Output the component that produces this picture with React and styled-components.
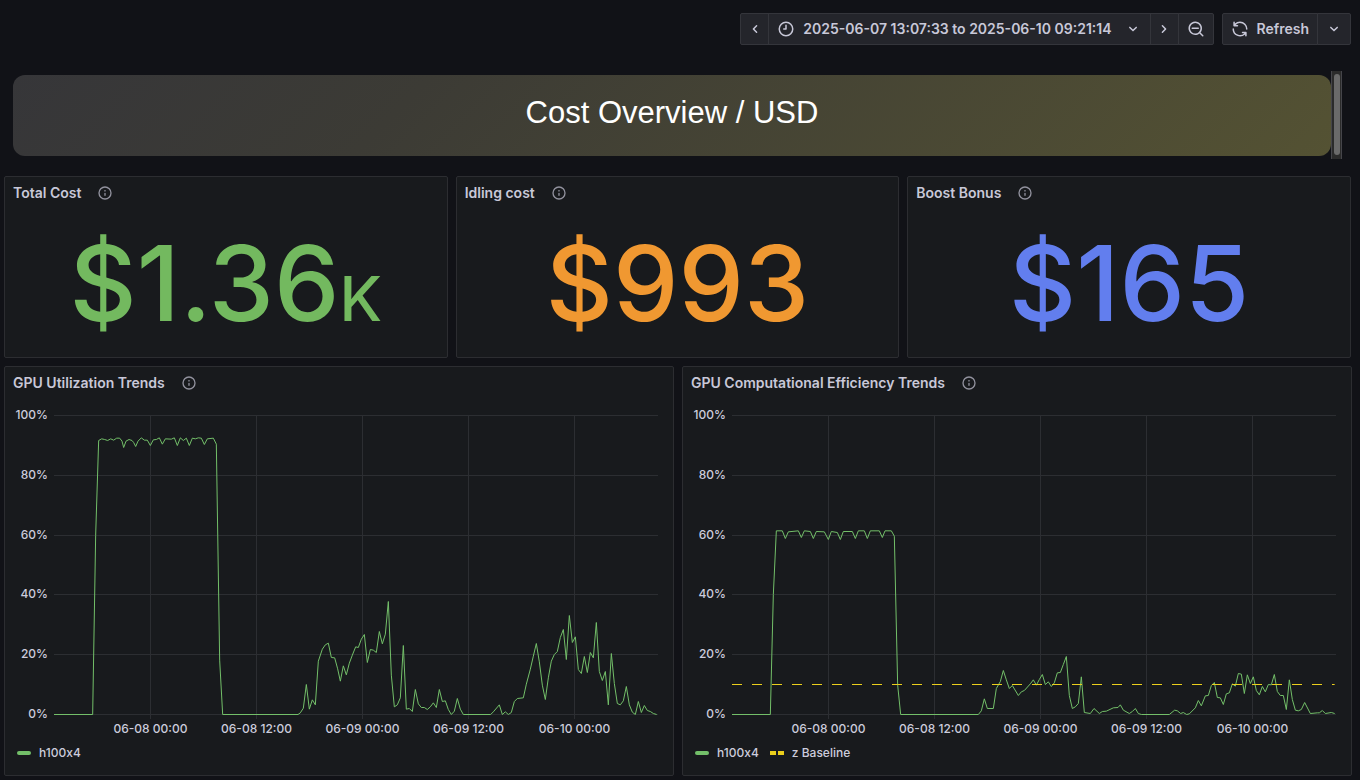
import React from "react";
import styled, { createGlobalStyle } from "styled-components";

const ICONS = {
  left: "M11.29,12l3.54-3.54a1,1,0,0,0,0-1.41,1,1,0,0,0-1.42,0L9.17,11.29a1,1,0,0,0,0,1.42L13.41,17a1,1,0,0,0,.71.29,1,1,0,0,0,.71-.29,1,1,0,0,0,0-1.41Z",
  right:
    "M14.83,11.29,10.59,7.05a1,1,0,0,0-1.42,0,1,1,0,0,0,0,1.41L12.71,12,9.17,15.54a1,1,0,0,0,0,1.41,1,1,0,0,0,.71.29,1,1,0,0,0,.71-.29l4.24-4.24A1,1,0,0,0,14.83,11.29Z",
  down: "M17,9.17a1,1,0,0,0-1.41,0L12,12.71,8.46,9.17a1,1,0,0,0-1.41,0,1,1,0,0,0,0,1.42l4.24,4.24a1,1,0,0,0,1.42,0L17,10.59A1,1,0,0,0,17,9.17Z",
  clock:
    "M12,2A10,10,0,1,0,22,12,10,10,0,0,0,12,2Zm0,18a8,8,0,1,1,8-8A8,8,0,0,1,12,20ZM12,6a1,1,0,0,0-1,1v4H9a1,1,0,0,0,0,2h3a1,1,0,0,0,1-1V7A1,1,0,0,0,12,6Z",
  zoomOut:
    "M21.71,20.29,18,16.61A9,9,0,1,0,16.61,18l3.68,3.68a1,1,0,0,0,1.42,0A1,1,0,0,0,21.71,20.29ZM11,18a7,7,0,1,1,7-7A7,7,0,0,1,11,18Zm4-8H7a1,1,0,0,0,0,2h8a1,1,0,0,0,0-2Z",
  sync: "M19.91,15.51H15.38a1,1,0,0,0,0,2h2.4A8,8,0,0,1,4,12a1,1,0,1,0-2,0,10,10,0,0,0,16.88,7.23V21a1,1,0,0,0,2,0V16.5A1,1,0,0,0,19.91,15.51ZM12,2A10,10,0,0,0,5.12,4.77V3a1,1,0,0,0-2,0V7.5a1,1,0,0,0,1,1h4.5a1,1,0,0,0,0-2H6.22A8,8,0,0,1,20,12a1,1,0,0,0,2,0A10,10,0,0,0,12,2Z",
  info: "M12,2A10,10,0,1,0,22,12,10.01114,10.01114,0,0,0,12,2Zm0,18a8,8,0,1,1,8-8A8.00917,8.00917,0,0,1,12,20Zm0-8.5a1,1,0,0,0-1,1v3a1,1,0,0,0,2,0v-3A1,1,0,0,0,12,11.5Zm0-4a1.25,1.25,0,1,0,1.25,1.25A1.25,1.25,0,0,0,12,7.5Z",
};

const STATS = [
  { title: "Total Cost", value: "$1.36", unit: "K", color: "#73b95f" },
  { title: "Idling cost", value: "$993", color: "#f09831" },
  { title: "Boost Bonus", value: "$165", color: "#627eee" },
];

const Y_TICKS = ["100%", "80%", "60%", "40%", "20%", "0%"];
const X_TICKS = [
  "06-08 00:00",
  "06-08 12:00",
  "06-09 00:00",
  "06-09 12:00",
  "06-10 00:00",
];

// series points: x 0-1812, y 0 (100%) to 897 (0%)
const UTILIZATION =
  "0,897 116,897 125,359 134,75 143,70 152,72 161,75 170,70 179,74 188,68 197,68 204,77 209,96 216,77 225,72 234,75 239,81 245,93 252,77 262,67 271,74 280,74 289,90 298,73 307,72 316,67 325,86 334,70 352,71 361,67 370,90 379,67 388,75 397,68 406,90 415,68 424,70 433,67 442,68 451,87 460,70 478,68 487,86 497,734 506,897 " +
  "732,897 739,892 748,878 757,807 766,881 775,853 784,868 793,737 805,701 814,688 823,683 832,726 842,727 851,760 859,797 868,751 877,778 886,743 895,719 905,694 913,696 922,671 931,657 940,741 949,702 958,704 967,711 976,648 985,685 994,656 1003,558 1012,779 1021,874 1030,868 1039,847 1048,690 1057,881 1066,879 1075,888 1084,822 1093,865 1102,876 1111,876 1120,882 1129,874 1138,862 1147,876 1156,822 1165,858 1174,856 1183,882 1192,897 1201,887 1210,849 " +
  "1219,881 1228,897 1310,897 1318,889 1336,868 1345,897 1354,889 1363,897 1372,891 1381,858 1390,849 1408,847 1417,806 1429,761 1438,722 1447,684 1456,739 1465,809 1474,852 1483,787 1492,737 1501,717 1510,708 1519,666 1528,642 1537,732 1546,600 1555,681 1564,664 1573,762 1582,774 1591,723 1600,771 1609,711 1618,727 1627,621 1636,768 1645,795 1654,768 1663,868 1672,714 1681,804 1690,864 1699,868 1708,856 1717,813 1726,868 1735,890 1744,897 1753,858 1762,891 1771,870 1780,885 1789,888 1798,894 1808,897";

const EFFICIENCY =
  "0,897 115,897 124,537 133,346 151,346 160,369 169,349 199,346 208,366 217,346 235,348 244,369 253,348 277,349 289,372 298,348 316,351 325,372 334,348 361,348 370,369 379,346 397,346 406,369 415,346 442,346 451,366 459,346 478,346 487,362 497,809 506,897 " +
  "739,897 748,886 757,850 766,879 784,879 793,819 805,798 814,765 823,793 832,819 841,810 859,840 868,829 877,825 895,805 904,793 913,809 922,792 931,777 940,807 949,799 958,813 967,802 976,772 985,771 994,747 1003,723 1012,840 1021,879 1030,874 1039,864 1048,784 1057,891 1075,894 1086,879 1102,894 1111,888 1123,887 1144,877 1158,876 1165,868 1174,884 1192,894 1201,888 1210,879 " +
  "1219,894 1228,897 1312,897 1328,884 1336,886 1346,894 1354,891 1364,897 1372,895 1390,877 1399,855 1408,871 1420,841 1429,840 1438,810 1447,801 1456,846 1465,847 1474,867 1483,835 1492,832 1501,805 1510,812 1519,774 1528,776 1537,834 1546,778 1555,804 1564,784 1573,825 1582,838 1591,813 1600,829 1609,807 1618,808 1627,777 1636,828 1645,840 1654,840 1663,882 1672,793 1681,852 1690,884 1699,886 1708,882 1718,861 1735,894 1756,892 1762,892 1771,885 1780,894 1798,891 1808,894";

const Icon = ({ name, size = 18 }) => (
  <svg width={size} height={size} viewBox="0 0 24 24" fill="currentColor" aria-hidden="true">
    <path d={ICONS[name]} />
  </svg>
);

const PanelTitle = ({ title }) => (
  <PanelHeader>
    <Title>{title}</Title>
    <InfoButton type="button" aria-label={`About ${title}`}>
      <Icon name="info" size={16} />
    </InfoButton>
  </PanelHeader>
);

const TrendPanel = ({ title, points, baseline }) => (
  <Panel>
    <PanelTitle title={title} />
    <ChartBody>
      <YAxis>
        {Y_TICKS.map((tick) => (
          <span key={tick}>{tick}</span>
        ))}
      </YAxis>
      <Plot role="img" aria-label={title}>
        {Y_TICKS.map((tick, i) => (
          <GridLine key={tick} x1="0" x2="100%" y1={0.5 + 59.8 * i} y2={0.5 + 59.8 * i} />
        ))}
        {X_TICKS.map((tick, i) => {
          const x = `${15.977 + 17.55 * i}%`;
          return (
            <g key={tick}>
              <GridLine x1={x} x2={x} y1="0" y2="304" />
              <XLabel x={x} y="318">
                {tick}
              </XLabel>
            </g>
          );
        })}
        <svg width="100%" height="300" viewBox="0 -1.5 1812 900" preserveAspectRatio="none">
          <Series points={points} />
          {baseline && <Baseline points="0,807 1808,807" />}
        </svg>
      </Plot>
    </ChartBody>
    <Legend>
      <LegendItem>
        <Swatch />
        h100x4
      </LegendItem>
      {baseline && (
        <LegendItem>
          <DashedSwatch />z Baseline
        </LegendItem>
      )}
    </Legend>
  </Panel>
);

const App = () => {
  return (
    <Page>
      <GlobalStyle />
      <Toolbar>
        <ButtonGroup>
          <ArrowButton type="button" aria-label="Move time range backwards">
            <Icon name="left" />
          </ArrowButton>
          <ToolButton type="button">
            <Icon name="clock" />
            <RangeText>2025-06-07 13:07:33 to 2025-06-10 09:21:14</RangeText>
            <Icon name="down" />
          </ToolButton>
          <ArrowButton type="button" aria-label="Move time range forwards">
            <Icon name="right" />
          </ArrowButton>
          <ToolButton type="button" aria-label="Zoom out time range">
            <Icon name="zoomOut" />
          </ToolButton>
        </ButtonGroup>
        <ButtonGroup>
          <ToolButton type="button">
            <Icon name="sync" />
            Refresh
          </ToolButton>
          <IntervalButton type="button" aria-label="Refresh interval">
            <Icon name="down" />
          </IntervalButton>
        </ButtonGroup>
      </Toolbar>
      <BannerRow>
        <Banner>
          <BannerTitle>Cost Overview / USD</BannerTitle>
        </Banner>
        <ScrollTrack>
          <ScrollThumb />
        </ScrollTrack>
      </BannerRow>
      <StatGrid>
        {STATS.map((stat) => (
          <Panel key={stat.title}>
            <PanelTitle title={stat.title} />
            <StatBody>
              <StatValue $color={stat.color}>
                {stat.value}
                {stat.unit && <StatUnit>{stat.unit}</StatUnit>}
              </StatValue>
            </StatBody>
          </Panel>
        ))}
      </StatGrid>
      <ChartGrid>
        <TrendPanel title="GPU Utilization Trends" points={UTILIZATION} />
        <TrendPanel title="GPU Computational Efficiency Trends" points={EFFICIENCY} baseline />
      </ChartGrid>
    </Page>
  );
};

export default App;

const GlobalStyle = createGlobalStyle`
  * {
    box-sizing: border-box;
  }

  body {
    margin: 0;
    background: #111217;
    color: #ccccdc;
    font-family: Inter, "Liberation Sans", sans-serif;
    font-size: 14px;
    line-height: 22px;
  }

  svg {
    display: block;
    flex-shrink: 0;
  }
`;

const Page = styled.main`
  padding: 13px 8px 4px 4px;
`;

const Toolbar = styled.header`
  display: flex;
  justify-content: flex-end;
  gap: 8px;
  padding-right: 1px;
`;

const ButtonGroup = styled.div`
  display: flex;
`;

const ToolButton = styled.button`
  display: flex;
  align-items: center;
  justify-content: center;
  gap: 8px;
  height: 32px;
  padding: 0 8px;
  border: 1px solid #34353b;
  background: #24252b;
  color: #c8c8d8;
  font: inherit;
  font-weight: 600;
  white-space: nowrap;

  &:first-child {
    border-radius: 2px 0 0 2px;
  }

  &:last-child {
    border-radius: 0 2px 2px 0;
  }

  & + & {
    margin-left: -1px;
  }
`;

const ArrowButton = styled(ToolButton)`
  width: 29px;
  padding: 0;

  & + ${ToolButton}, ${ToolButton} + & {
    margin-left: -1px;
  }
`;

const IntervalButton = styled(ToolButton)`
  padding: 0 7px;
`;

const RangeText = styled.span`
  margin-right: 4px;
`;

const BannerRow = styled.section`
  display: flex;
  margin-top: 26px;
  padding: 0 10px 0 9px;
`;

const Banner = styled.div`
  flex: 1;
  height: 81px;
  margin: 4px 0 3px;
  padding-top: 20px;
  border-radius: 12px;
  background: linear-gradient(135deg, #363639 0%, #3c3b35 30%, #545233 100%);
`;

const BannerTitle = styled.h1`
  margin: 0;
  color: #fff;
  font-family: "Liberation Sans", Arial, sans-serif;
  font-size: 31px;
  font-weight: 400;
  line-height: 36px;
  text-align: center;
`;

const ScrollTrack = styled.div`
  width: 11px;
  padding: 3px 1px 4px 2px;
  border: solid #45454a;
  border-width: 0 1px;
  background: #2b2b2b;
`;

const ScrollThumb = styled.div`
  width: 6px;
  height: 100%;
  border-radius: 3px;
  background: #6a6a6a;
`;

const StatGrid = styled.section`
  display: grid;
  grid-template-columns: repeat(3, 1fr);
  gap: 8px;
  margin-top: 17px;
  padding-right: 1px;
`;

const ChartGrid = styled.section`
  display: grid;
  grid-template-columns: repeat(2, 1fr);
  gap: 8px;
  margin-top: 8px;
`;

const Panel = styled.article`
  border: 1px solid #2c2d31;
  border-radius: 2px;
  background: #181a1d;
`;

const PanelHeader = styled.header`
  display: flex;
  align-items: center;
  gap: 16px;
  height: 32px;
  padding: 0 8px;
`;

const Title = styled.h2`
  margin: 0;
  color: #c8c8d8;
  font-size: 14px;
  font-weight: 600;
`;

const InfoButton = styled.button`
  padding: 0;
  border: 0;
  background: none;
  color: #92929e;
`;

const StatBody = styled.div`
  display: flex;
  align-items: center;
  justify-content: center;
  height: 148px;
`;

const StatValue = styled.div`
  color: ${(props) => props.$color};
  font-size: 104px;
  font-weight: 500;
  line-height: 120px;
`;

const StatUnit = styled.span`
  font-size: 62px;
  line-height: 1;
`;

const ChartBody = styled.div`
  display: flex;
  gap: 6px;
  padding: 8px 15px 0 8px;
`;

const YAxis = styled.div`
  display: flex;
  flex-direction: column;
  justify-content: space-between;
  width: 35px;
  height: 315px;
  font-size: 12px;
  font-weight: 500;
  line-height: 16px;
  text-align: right;
`;

const Plot = styled.svg`
  flex: 1;
  min-width: 0;
  height: 324px;
  margin-top: 8px;
  overflow: visible;
`;

const GridLine = styled.line`
  stroke: #2c2e32;
  shape-rendering: crispEdges;
`;

const XLabel = styled.text`
  fill: #ccccdc;
  font-size: 12px;
  font-weight: 500;
  text-anchor: middle;
`;

const Series = styled.polyline`
  fill: none;
  stroke: #73bf69;
  stroke-width: 1px;
  vector-effect: non-scaling-stroke;
`;

const Baseline = styled(Series)`
  stroke: #ebcf1c;
  stroke-dasharray: 10 10;
`;

const Legend = styled.div`
  display: flex;
  gap: 11px;
  padding: 6px 12px 14px;
  font-size: 12px;
  font-weight: 500;
  font-variant-ligatures: no-contextual;
  line-height: 16px;
`;

const LegendItem = styled.span`
  display: flex;
  align-items: center;
  gap: 8px;
`;

const Swatch = styled.span`
  width: 14px;
  height: 4px;
  border-radius: 2px;
  background: #73bf69;
`;

const DashedSwatch = styled.span`
  width: 14px;
  height: 4px;
  background: linear-gradient(90deg, #ebcf1c 6px, transparent 6px 8px, #ebcf1c 8px);
`;
